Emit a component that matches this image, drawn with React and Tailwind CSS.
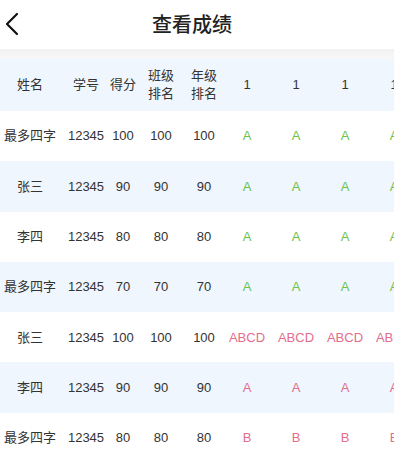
const cols = [
  { key: "name", w: "w-[60px]" },
  { key: "no", w: "w-[52px]" },
  { key: "score", w: "w-[22px]" },
  { key: "cls", w: "w-[54px]" },
  { key: "grade", w: "w-[32px]" },
  { key: "q1", w: "w-[54px]" },
  { key: "q2", w: "w-[44px]" },
  { key: "q3", w: "w-[54px]" },
  { key: "q4", w: "w-[44px]" },
];

const rows = [
  { name: "最多四字", no: "12345", score: "100", cls: "100", grade: "100", ans: "A", tone: "green" },
  { name: "张三", no: "12345", score: "90", cls: "90", grade: "90", ans: "A", tone: "green" },
  { name: "李四", no: "12345", score: "80", cls: "80", grade: "80", ans: "A", tone: "green" },
  { name: "最多四字", no: "12345", score: "70", cls: "70", grade: "70", ans: "A", tone: "green" },
  { name: "张三", no: "12345", score: "100", cls: "100", grade: "100", ans: "ABCD", tone: "red" },
  { name: "李四", no: "12345", score: "90", cls: "90", grade: "90", ans: "A", tone: "red" },
  { name: "最多四字", no: "12345", score: "80", cls: "80", grade: "80", ans: "B", tone: "red" },
];

function Cell({ w, children, className = "" }) {
  return (
    <div className={`${w} shrink-0 flex items-center justify-center text-center whitespace-nowrap ${className}`}>
      {children}
    </div>
  );
}

export default function App() {
  return (
    <div
      className="w-[394px] h-[450px] overflow-hidden bg-white text-[#333]"
      style={{ fontFamily: '"Liberation Sans", "Noto Sans CJK SC", sans-serif' }}
    >
      <div className="relative h-[49px] flex items-center justify-center bg-white">
        {/* back arrow */}
        <svg className="absolute left-0 top-0" width="24" height="48" viewBox="0 0 24 48" fill="none">
          <polyline points="17,14 7,24 17,34" stroke="#111" strokeWidth="2.2" strokeLinecap="round" strokeLinejoin="round" />
        </svg>
        <span className="text-[20px] font-medium text-[#222] pr-[10px]">查看成绩</span>
      </div>
      <div className="h-[10px] bg-gradient-to-b from-[#f1f1f1] to-[#f8f8f8]" />

      <div className="w-[600px] text-[13px]">
        <div className="flex h-[52px] bg-[#eff6fd]">
          <Cell w={cols[0].w}>姓名</Cell>
          <Cell w={cols[1].w}>学号</Cell>
          <Cell w={cols[2].w}>得分</Cell>
          <Cell w={cols[3].w} className="leading-[18px]">班级<br />排名</Cell>
          <Cell w={cols[4].w} className="leading-[18px]">年级<br />排名</Cell>
          <Cell w={cols[5].w}>1</Cell>
          <Cell w={cols[6].w}>1</Cell>
          <Cell w={cols[7].w}>1</Cell>
          <Cell w={cols[8].w}>1</Cell>
        </div>
        {rows.map((r, i) => (
          <div key={i} className={`flex h-[50.3px] ${i % 2 === 1 ? "bg-[#eff6fd]" : "bg-white"}`}>
            <Cell w={cols[0].w}>{r.name}</Cell>
            <Cell w={cols[1].w}>{r.no}</Cell>
            <Cell w={cols[2].w}>{r.score}</Cell>
            <Cell w={cols[3].w}>{r.cls}</Cell>
            <Cell w={cols[4].w}>{r.grade}</Cell>
            {[5, 6, 7, 8].map((c) => (
              <Cell
                key={c}
                w={cols[c].w}
                className={r.tone === "green" ? "text-[#6cc24a]" : "text-[#e46d8d]"}
              >
                {r.ans}
              </Cell>
            ))}
          </div>
        ))}
      </div>
    </div>
  );
}
